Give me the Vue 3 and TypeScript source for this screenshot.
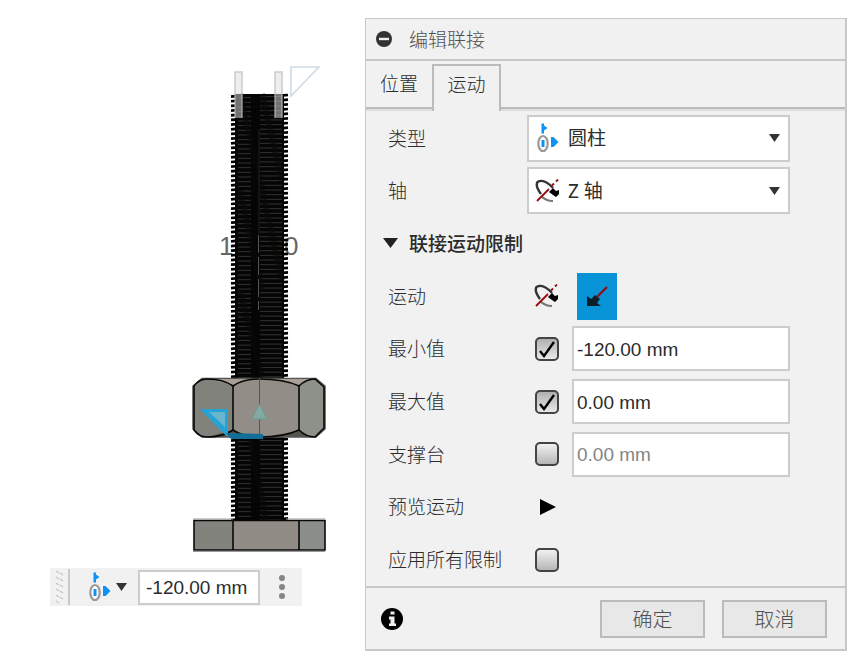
<script setup lang="ts">
import { ref } from 'vue'

const jointType = ref('cylindrical')
const axis = ref('z')
const tab = ref('motion')

interface Limit {
  id: string
  label: string
  on: boolean
  value: string
}

const limits = ref<Limit[]>([
  { id: 'min', label: '最小值', on: true, value: '-120.00 mm' },
  { id: 'max', label: '最大值', on: true, value: '0.00 mm' },
  { id: 'rest', label: '支撑台', on: false, value: '0.00 mm' },
])
const applyAll = ref(false)
const offset = ref('-120.00 mm')

// Thread ridges along the bolt shaft
const pitch = 4.67
const ridges = (from: number, to: number): number[] => {
  const out: number[] = []
  for (let y = from; y < to; y += pitch) out.push(Number(y.toFixed(2)))
  return out
}
const threads = [...ridges(95, 377), ...ridges(439, 519)]
</script>

<template>
  <main class="page">
    <section class="scene">
      <svg class="model" viewBox="50 60 290 500" aria-hidden="true">
        <g font-family="Liberation Sans, sans-serif" font-size="26" fill="#666">
          <text x="219" y="255">1</text>
          <text x="284" y="255">0</text>
        </g>
        <rect x="235" y="94" width="49" height="286" fill="#050505" />
        <rect x="235" y="436" width="49" height="85" fill="#050505" />
        <g v-for="y in threads" :key="y">
          <path :d="`M231 ${y + 1.6}L236 ${y + 1.2}M283 ${y + 0.4}L288 ${y}`" stroke="#000" stroke-width="2.7" />
          <path :d="`M238 ${y + 2.6}H251M260 ${y + 1.6}H282`" stroke="#33332e" stroke-width="1" />
        </g>
        <path d="M240 94L262 190M240 190L262 290M240 290L262 378M250 440L266 520M262 94L282 180M262 190L282 280" stroke="#080808" stroke-width="6" stroke-opacity=".6" />
        <path d="M259 130V234" stroke="#222" />
        <path d="M258.500 235V310" stroke="#555" stroke-dasharray="18 4" />
        <g fill="#ddd" fill-opacity=".5" stroke="#bbb" stroke-opacity=".55" stroke-width="2">
          <path d="M235 118V72H242V118" />
          <path d="M275 118V72H282V118" />
        </g>
        <path d="M291 67H319L291 96Z" fill="#fff" stroke="#d0dbe5" stroke-width="1.600" />
        <path d="M202 378.500H316L325 386V429L316 437H202L193 429V386Z" fill="#82827c" stroke="#555" stroke-width="1.500" />
        <path d="M233 385Q259 372 299 385V430Q259 445 233 430Z" fill="#928d86" />
        <path d="M300 386Q307 379 315 379L324 387V428L315 437Q307 436 300 430Z" fill="#8d918a" />
        <path d="M207 379L233 385Q240 380 252 379ZM267 379Q287 379 298 385L310 379Z" fill="#aaa196" />
        <path d="M207 437L233 430Q240 435 252 437ZM267 437Q287 436 298 430L310 437Z" fill="#55534d" />
        <g fill="none" stroke="#080808" stroke-width="1.600">
          <path d="M194 386Q199 379 207 379Q223 379 233 386Q243 379 259 379Q284 379 299 386Q306 379 315 379L324 387V428L315 437Q306 437 299 430Q284 437 259 437Q243 437 233 430Q223 437 207 437Q199 437 194 430Z" />
          <path d="M233 385V431M299 385V431" />
        </g>
        <path d="M259.500 378V434" stroke="#555" />
        <path d="M200 409H228V437L222 432Z" fill="#27a2d4" />
        <path d="M209 412H225V427Z" fill="#69b5cf" />
        <path d="M226 433L231 439H263V434Z" fill="#116f98" />
        <path d="M259.500 404L267 419H252Z" fill="#82aaa2" stroke="#719990" />
        <path d="M194 520.500H325V550H194Z" fill="#83837d" />
        <path d="M234 521H299V550H234Z" fill="#918c85" />
        <path d="M300 521H325V550H300Z" fill="#8a9089" />
        <path d="M194 520.500H325V550H194ZM233 521V550M299 521V550" fill="none" stroke="#090909" stroke-width="1.600" />
        <path d="M193 551.500H325M193 519H233M286 519H325" stroke="#999" />
      </svg>

      <div class="toolbar">
        <svg class="grip" viewBox="0 0 10 36" aria-hidden="true">
          <path d="M1 2l3 2M5 4l3 2M1 8l3 2M5 10l3 2M1 14l3 2M5 16l3 2M1 20l3 2M5 22l3 2M1 26l3 2M5 28l3 2M1 32l3 2" stroke="#c8c8c8" stroke-width="1.500" />
        </svg>
        <button class="mode" type="button" aria-label="圆柱">
          <svg class="joint" viewBox="0 0 26 32" aria-hidden="true">
            <ellipse cx="8" cy="21.500" rx="4.700" ry="7.500" fill="#fff" stroke="#999" stroke-width="2.200" />
            <path d="M6.500 1.500h2.500v2l3.500 2.500-3.500 2.500v3h-2.500zM6.500 18h3v7h-3zM16 15h2.500l5 5-5 5h-2.500z" fill="#0b94f5" />
          </svg>
          <svg class="caret" viewBox="0 0 11 8" aria-hidden="true"><path d="M0 0h11L5.500 8z" fill="#333" /></svg>
        </button>
        <input v-model="offset" class="offset" type="text" aria-label="偏移" />
        <button class="more" type="button" aria-label="更多">
          <svg viewBox="0 0 6 24" aria-hidden="true"><g fill="#858585"><circle cx="3" cy="3" r="3" /><circle cx="3" cy="12" r="3" /><circle cx="3" cy="21" r="3" /></g></svg>
        </button>
      </div>
    </section>

    <form class="dialog" @submit.prevent>
      <header class="title">
        <svg viewBox="0 0 16 16" aria-hidden="true"><circle cx="8" cy="8" r="8" fill="#333" /><path d="M3 8h10" stroke="#f1f1f1" stroke-width="2.400" /></svg>
        <h1>编辑联接</h1>
      </header>

      <nav class="tabs">
        <button type="button" class="tab" :class="{ active: tab === 'position' }" @click="tab = 'position'">位置</button>
        <button type="button" class="tab" :class="{ active: tab === 'motion' }" @click="tab = 'motion'">运动</button>
      </nav>

      <div class="rows">
        <div class="row">
          <label class="name" for="type">类型</label>
          <div class="picker">
            <svg class="joint" viewBox="0 0 26 32" aria-hidden="true">
              <ellipse cx="8" cy="21.500" rx="4.700" ry="7.500" fill="#fff" stroke="#999" stroke-width="2.200" />
              <path d="M6.500 1.500h2.500v2l3.500 2.500-3.500 2.500v3h-2.500zM6.500 18h3v7h-3zM16 15h2.500l5 5-5 5h-2.500z" fill="#0b94f5" />
            </svg>
            <select id="type" v-model="jointType"><option value="cylindrical">圆柱</option></select>
            <svg class="caret" viewBox="0 0 11 8" aria-hidden="true"><path d="M0 0h11L5.500 8z" fill="#333" /></svg>
          </div>
        </div>
        <div class="row">
          <label class="name" for="axis">轴</label>
          <div class="picker">
            <svg class="turn" viewBox="0 0 26 24" aria-hidden="true">
              <path d="M6 15Q0 7 2.500 3Q9 -1 18 9" fill="none" stroke="#333" stroke-width="2.400" />
              <path d="M6 17Q11 22 18 22" fill="none" stroke="#777" stroke-width="2.200" />
              <path d="M14 13L18 9L21 12L24 11V15L21 18L18 16Z" fill="#000" />
              <path d="M2 22L14 10M17 6.500l2-2M21 2.500l2-2" stroke="#980c12" stroke-width="1.800" />
            </svg>
            <select id="axis" v-model="axis"><option value="z">Z 轴</option></select>
            <svg class="caret" viewBox="0 0 11 8" aria-hidden="true"><path d="M0 0h11L5.500 8z" fill="#333" /></svg>
          </div>
        </div>
        <button class="group" type="button">
          <svg viewBox="0 0 15 10" aria-hidden="true"><path d="M0 0h15L7.500 10z" fill="#222" /></svg>
          联接运动限制
        </button>
        <div class="row">
          <span class="name">运动</span>
          <div class="choices">
            <button class="choice" type="button" aria-label="旋转">
              <svg class="turn" viewBox="0 0 26 24" aria-hidden="true">
                <path d="M6 15Q0 7 2.500 3Q9 -1 18 9" fill="none" stroke="#333" stroke-width="2.400" />
                <path d="M6 17Q11 22 18 22" fill="none" stroke="#777" stroke-width="2.200" />
                <path d="M14 13L18 9L21 12L24 11V15L21 18L18 16Z" fill="#000" />
                <path d="M2 22L14 10M17 6.500l2-2M21 2.500l2-2" stroke="#980c12" stroke-width="1.800" />
              </svg>
            </button>
            <button class="choice chosen" type="button" aria-label="滑动">
              <svg class="slide" viewBox="0 0 22 22" aria-hidden="true">
                <path d="M1 11V21H15L11 18L14 14L9 10L5 14Z" fill="#0a2029" />
                <path d="M11 12L21 2" stroke="#8f1015" stroke-width="2.400" />
              </svg>
            </button>
          </div>
        </div>
        <div v-for="l in limits" :key="l.id" class="row">
          <label class="name" :for="l.id">{{ l.label }}</label>
          <div class="limit">
            <span class="tick">
              <input :id="l.id" v-model="l.on" type="checkbox" />
              <svg v-if="l.on" viewBox="0 0 24 24" aria-hidden="true"><path d="M5 14l4 5L19 5" fill="none" stroke="#000" stroke-width="2.400" /></svg>
            </span>
            <input v-model="l.value" class="value" type="text" :disabled="!l.on" :aria-label="l.label" />
          </div>
        </div>
        <div class="row">
          <span class="name">预览运动</span>
          <div class="limit">
            <button class="play" type="button" aria-label="预览运动">
              <svg viewBox="0 0 16 16" aria-hidden="true"><path d="M0 0L16 8L0 16z" /></svg>
            </button>
          </div>
        </div>
        <div class="row">
          <label class="name" for="all">应用所有限制</label>
          <div class="limit"><span class="tick"><input id="all" v-model="applyAll" type="checkbox" /></span></div>
        </div>
      </div>

      <footer class="footer">
        <svg class="info" viewBox="0 0 22 22" aria-hidden="true"><circle cx="11" cy="11" r="11" /><path d="M9.500 3.500h4v3h-4zM8 8.500h5.500v7H15V18H8v-2.500h1.500v-4H8z" fill="#eee" /></svg>
        <button type="submit">确定</button>
        <button type="button">取消</button>
      </footer>
    </form>
  </main>
</template>

<style>
body {
  background: #fff;
}
</style>

<style scoped>
* {
  box-sizing: border-box;
}
.page {
  display: grid;
  grid-template-columns: minmax(0, 365fr) minmax(0, 482fr);
  min-height: 100vh;
  padding-right: 7px;
  font-family: 'Liberation Sans', 'Noto Sans CJK SC', sans-serif;
  font-size: 19px;
  font-weight: 300;
  color: #2c2c2c;
}
button,
input,
select {
  font: inherit;
  color: inherit;
  margin: 0;
}
button {
  padding: 0;
  border: 0;
  background: none;
}
svg {
  display: block;
  flex: none;
}
.scene {
  padding: 60px 0 0 50px;
}
.model {
  width: 290px;
  height: 500px;
}
.toolbar {
  display: inline-flex;
  align-items: center;
  height: 38px;
  margin-top: 8px;
  padding-left: 5px;
  background: #f1f1f1;
}
.grip {
  width: 10px;
  height: 36px;
}
.mode {
  display: flex;
  align-items: center;
  gap: 3px;
  height: 36px;
  margin-left: 3px;
  padding: 0 11px 0 17px;
  border-left: 2px solid #c8c8c8;
}
.joint {
  width: 26px;
  height: 32px;
}
.caret {
  width: 11px;
  height: 8px;
}
.offset {
  width: 122px;
  height: 35px;
  padding: 1px 6px 0;
  border: 2px solid #ccc;
  background: #fff;
}
.more {
  padding: 0 17px 0 19px;
}
.more svg {
  width: 6px;
  height: 24px;
}
.dialog {
  display: flex;
  flex-direction: column;
  margin: 18px 0 7px;
  background: #f1f1f1;
  border: 1px solid #c8c8c8;
  border-right-width: 2px;
  border-bottom-width: 2px;
}
.title {
  display: flex;
  align-items: center;
  gap: 17px;
  height: 42px;
  padding-left: 10px;
  border-bottom: 2px solid #c8c8c8;
}
.title svg {
  width: 16px;
  height: 16px;
}
h1 {
  margin: 0;
  padding-bottom: 2px;
  font-size: 19px;
  font-weight: 300;
  color: #505050;
}
.tabs {
  display: flex;
  height: 50px;
  padding-top: 3px;
  border-bottom: 2px solid #ddd;
  box-shadow: inset 0 -2px #bbb;
}
.tab {
  width: 66px;
  padding-bottom: 8px;
}
.tab.active {
  width: 69px;
  margin-bottom: -2px;
  padding-bottom: 10px;
  border: 2px solid #bbb;
  border-bottom: 0;
  background: #f1f1f1;
}
.rows {
  flex: 1;
  display: grid;
  grid-template-rows: repeat(9, 1fr);
  padding: 1px 55px 0 22px;
  border-bottom: 2px solid #c8c8c8;
}
.row {
  display: grid;
  grid-template-columns: 139px minmax(0, 1fr);
  align-items: center;
}
.name {
  padding-bottom: 2px;
}
.picker {
  display: flex;
  align-items: center;
  height: 47px;
  padding: 0 8px 0 6px;
  border: 2px solid #ccc;
  background: #fff;
}
.picker select {
  flex: 1;
  min-width: 0;
  height: 40px;
  padding: 0 7px;
  border: 0;
  appearance: none;
  background: none;
  font-family: 'Noto Sans', 'Noto Sans CJK SC', sans-serif;
  font-weight: 400;
}
.turn {
  width: 26px;
  height: 24px;
}
.group {
  display: flex;
  align-items: center;
  gap: 11px;
  margin-left: -5px;
  padding-bottom: 2px;
  font-weight: 500;
}
.group svg {
  width: 15px;
  height: 10px;
}
.choices {
  display: flex;
  gap: 10px;
}
.choice {
  display: grid;
  place-items: center;
  width: 40px;
  height: 47px;
}
.chosen {
  background: #0a94d8;
}
.slide {
  width: 22px;
  height: 22px;
}
.limit {
  display: flex;
  align-items: center;
  gap: 13px;
  padding-left: 8px;
}
.tick {
  display: grid;
  width: 24px;
  height: 24px;
}
.tick > * {
  grid-area: 1 / 1;
}
.tick input {
  width: 24px;
  height: 24px;
  border: 2px solid #444;
  border-radius: 5px;
  appearance: none;
  background: linear-gradient(#f1f1f1, #b5b5b5);
}
.tick input:checked {
  background: linear-gradient(#b0b0b0, #e8e8e8);
}
.tick svg {
  pointer-events: none;
}
.value {
  flex: 1;
  min-width: 0;
  height: 45px;
  padding: 2px 3px 0;
  border: 2px solid #ccc;
  background: #fff;
}
.value:disabled {
  color: #858585;
}
.play {
  padding: 0 4px 0 5px;
}
.play svg {
  width: 16px;
  height: 16px;
}
.footer {
  display: flex;
  align-items: center;
  gap: 17px;
  height: 61px;
  padding: 1px 18px 0 15px;
}
.info {
  width: 22px;
  height: 22px;
  margin-right: auto;
}
.footer button {
  width: 105px;
  height: 38px;
  padding-bottom: 2px;
  border: 2px solid #bbb;
  background: #e8e8e8;
  color: #505050;
  font-size: 20px;
}
</style>
